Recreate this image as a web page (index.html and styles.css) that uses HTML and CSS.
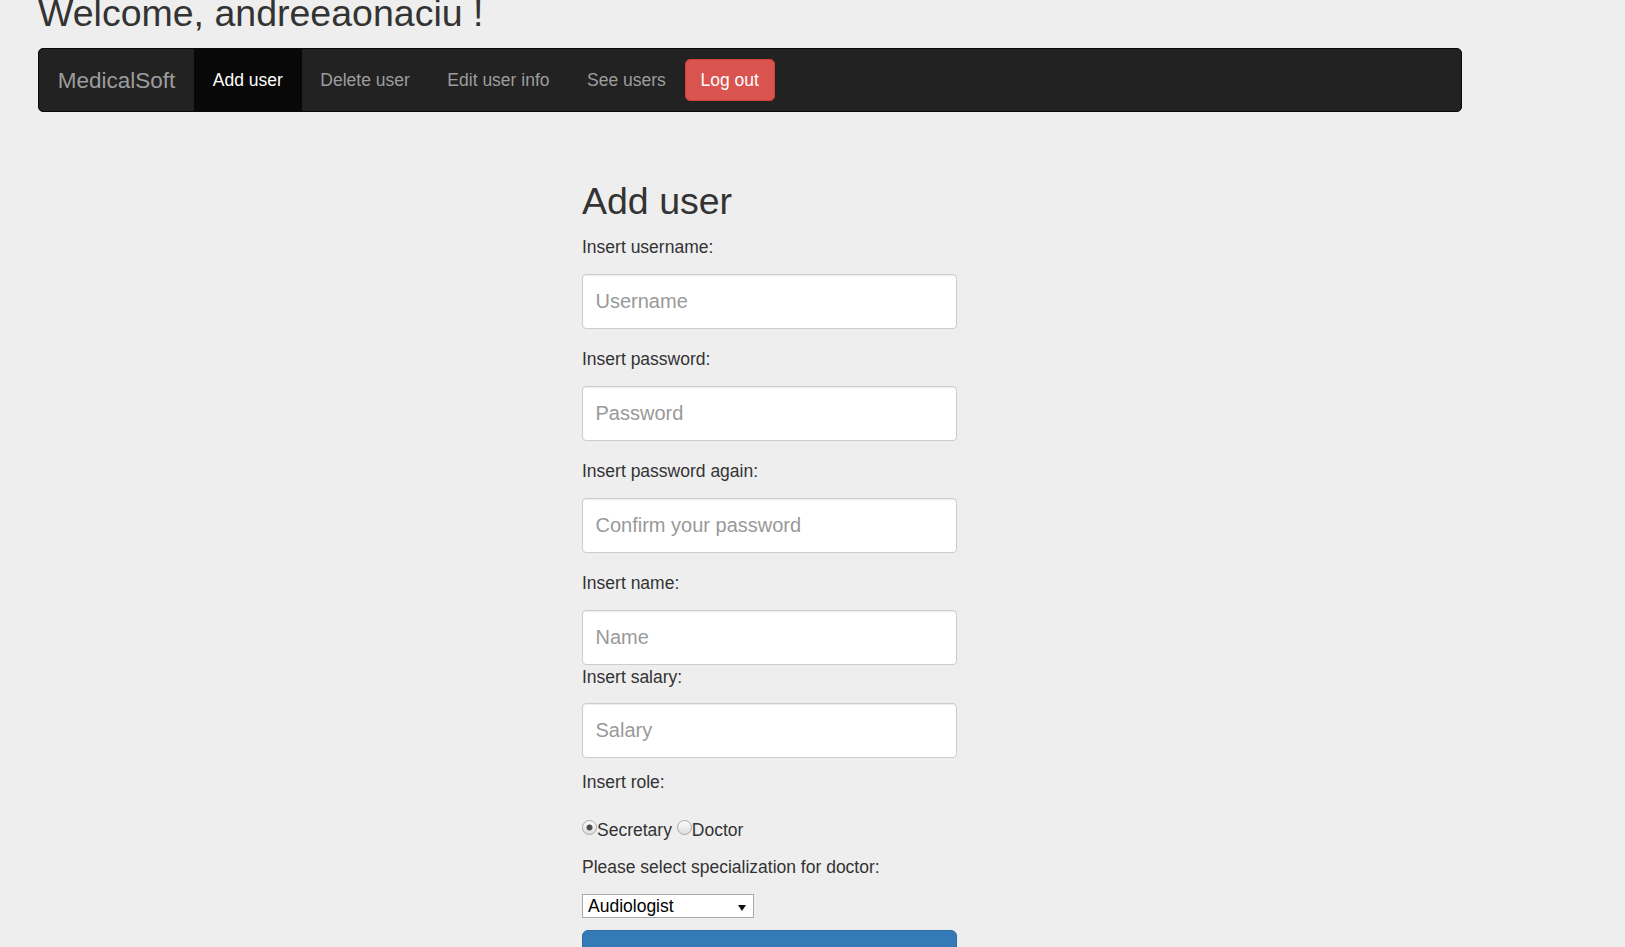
FILE: index.html
```html
<!DOCTYPE html>
<html lang="en">
<head>
<meta charset="utf-8">
<title>MedicalSoft - Add user</title>
<link rel="stylesheet" href="styles.css">
</head>
<body>
<div class="page">
  <h1 class="welcome">Welcome, andreeaonaciu !</h1>
  <nav class="navbar">
    <a class="brand" href="#">MedicalSoft</a>
    <ul class="nav">
      <li class="nav-item active"><a class="nav-link" href="#">Add user</a></li>
      <li class="nav-item"><a class="nav-link" href="#">Delete user</a></li>
      <li class="nav-item"><a class="nav-link" href="#">Edit user info</a></li>
      <li class="nav-item"><a class="nav-link" href="#">See users</a></li>
    </ul>
    <button class="btn-logout" type="button">Log out</button>
  </nav>

  <form class="form">
    <h2 class="form-title">Add user</h2>

    <div class="field">
      <label class="label" for="username">Insert username:</label>
      <input class="input" id="username" type="text" placeholder="Username">
    </div>
    <div class="field">
      <label class="label" for="password">Insert password:</label>
      <input class="input" id="password" type="password" placeholder="Password">
    </div>
    <div class="field">
      <label class="label" for="password2">Insert password again:</label>
      <input class="input" id="password2" type="password" placeholder="Confirm your password">
    </div>
    <div class="field field-tight">
      <label class="label" for="name">Insert name:</label>
      <input class="input" id="name" type="text" placeholder="Name">
    </div>
    <div class="field field-salary">
      <label class="label label-salary" for="salary">Insert salary:</label>
      <input class="input" id="salary" type="text" placeholder="Salary">
    </div>

    <div class="label label-role">Insert role:</div>
    <div class="radio-row"><input class="radio" type="radio" name="role" id="secretary" checked><label for="secretary">Secretary</label> <input class="radio" type="radio" name="role" id="doctor"><label for="doctor">Doctor</label></div>

    <label class="label label-spec" for="spec">Please select specialization for doctor:</label>
    <span class="select-wrap">
      <select class="select" id="spec">
        <option>Audiologist</option>
        <option>Cardiologist</option>
        <option>Dermatologist</option>
      </select>
    </span>

    <button class="btn-submit" type="submit">Add user</button>
  </form>
</div>
</body>
</html>
```

FILE: styles.css
```css
html, body {
  margin: 0;
  padding: 0;
}

body {
  background: #eeeeee;
  color: #333333;
  font-family: "Liberation Sans", Arial, Helvetica, sans-serif;
  font-size: 17.5px;
  line-height: 25px;
  overflow: hidden;
}

.page {
  padding-left: 38px;
}

.welcome {
  margin: -7px 0 13.75px;
  font-size: 37.5px;
  line-height: 41.25px;
  font-weight: 400;
  color: #333333;
}

/* Navbar */
.navbar {
  box-sizing: border-box;
  width: 1424px;
  height: 64px;
  display: flex;
  align-items: flex-start;
  background: #222222;
  border: 1px solid #080808;
  border-radius: 5px;
}

.brand {
  display: block;
  height: 62px;
  box-sizing: border-box;
  padding: 18.5px 18.75px;
  font-size: 22.5px;
  line-height: 25px;
  color: #9d9d9d;
  text-decoration: none;
}

.nav {
  display: flex;
  list-style: none;
  margin: 0;
  padding: 0;
}

.nav-link {
  display: block;
  padding: 19px 18.75px;
  line-height: 24px;
  font-size: 17.5px;
  color: #9d9d9d;
  text-decoration: none;
}

.nav-item.active .nav-link {
  background: #080808;
  color: #ffffff;
}

.btn-logout {
  margin-top: 10px;
  height: 42px;
  padding: 0 15px;
  box-sizing: border-box;
  background: #d9534f;
  border: 1px solid #d43f3a;
  border-radius: 5px;
  color: #ffffff;
  font-family: inherit;
  font-size: 17.5px;
  line-height: 40px;
  cursor: pointer;
}

/* Form */
.form {
  width: 375px;
  margin-left: 544px;
}

.form-title {
  margin: 69.25px 0 12px;
  font-size: 37.5px;
  line-height: 41.25px;
  font-weight: 400;
  color: #333333;
}

.field {
  margin-bottom: 18px;
}

.field-tight {
  margin-bottom: 0;
}

.field-salary {
  margin-bottom: 12px;
}

.label {
  display: block;
  margin-bottom: 14px;
  font-weight: 400;
  line-height: 25px;
  color: #333333;
}

.label-salary {
  margin-bottom: 13.5px;
}

.label-role {
  margin-bottom: 23px;
}

.input {
  display: block;
  box-sizing: border-box;
  width: 375px;
  height: 55px;
  padding: 0 12.5px;
  background: #ffffff;
  border: 1px solid #cccccc;
  border-radius: 4px;
  box-shadow: inset 0 1px 1px rgba(0, 0, 0, 0.075);
  font-family: inherit;
  font-size: 20px;
  color: #555555;
  outline: none;
}

.input::placeholder {
  color: #999999;
}

.radio-row {
  line-height: 25px;
  margin-bottom: 12px;
  color: #333333;
}

.radio {
  -webkit-appearance: none;
  appearance: none;
  display: inline-block;
  box-sizing: border-box;
  width: 15px;
  height: 15px;
  margin: 0 0 1px 0;
  vertical-align: baseline;
  border: 1px solid #a9a9a9;
  border-radius: 50%;
  background: linear-gradient(#fbfbfb, #dedede);
}

.radio:checked {
  background: radial-gradient(circle, #4d4d4d 0, #4d4d4d 2.6px, rgba(77, 77, 77, 0) 3.4px), linear-gradient(#fbfbfb, #dedede);
}

.label-spec {
  margin-bottom: 13.75px;
}

.select-wrap {
  position: relative;
  display: block;
  width: 172px;
  height: 24px;
}

.select-wrap::after {
  content: "";
  position: absolute;
  left: 156px;
  top: 11.5px;
  width: 0;
  height: 0;
  border-left: 4px solid transparent;
  border-right: 4px solid transparent;
  border-top: 6.5px solid #111111;
  pointer-events: none;
}

.select {
  -webkit-appearance: none;
  appearance: none;
  display: block;
  box-sizing: border-box;
  width: 172px;
  height: 24px;
  margin: 0;
  padding: 0 0 0 5px;
  background: #ffffff;
  border: 1px solid #a9a9a9;
  border-radius: 0;
  font-family: inherit;
  font-size: 17.5px;
  line-height: 22px;
  color: #000000;
}

.btn-submit {
  display: block;
  box-sizing: border-box;
  width: 375px;
  height: 64px;
  margin-top: 12.5px;
  background: #337ab7;
  border: 1px solid #2e6da4;
  border-radius: 6px;
  color: #ffffff;
  font-family: inherit;
  font-size: 20px;
  line-height: 24px;
  cursor: pointer;
}
```
